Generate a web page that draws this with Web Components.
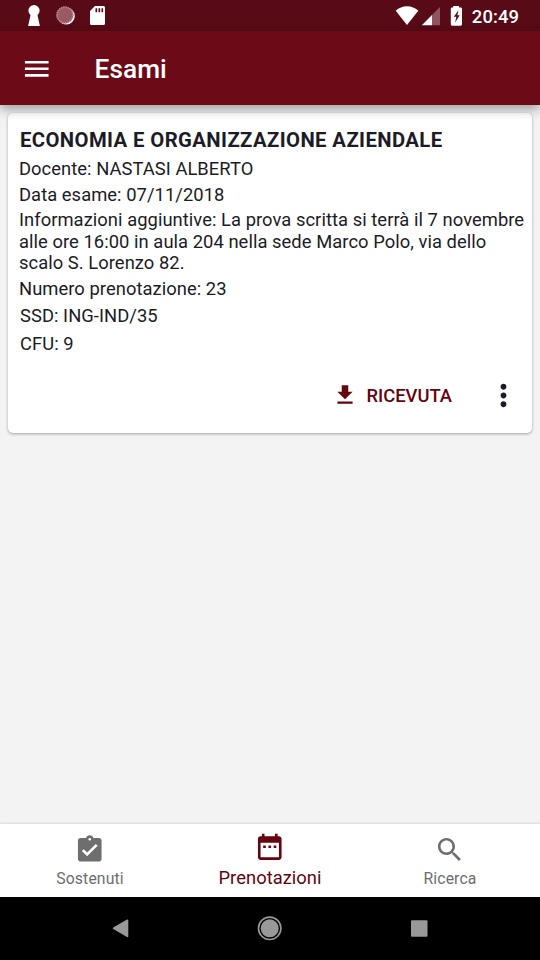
<!DOCTYPE html>
<html lang="it">
<head>
<meta charset="utf-8">
<title>Esami</title>
<style>
html,body{margin:0;height:100%}
body{font-family:Roboto,"Liberation Sans",sans-serif;color:#1c1b26;background:#f3f3f3;overflow:hidden}
</style>
</head>
<body>
<exam-app></exam-app>
<script>
const define = (name, markup) => {
  const template = document.createElement('template');
  template.innerHTML = markup;
  customElements.define(name, class extends HTMLElement {
    constructor() {
      super();
      this.attachShadow({mode: 'open'}).append(template.content.cloneNode(true));
    }
  });
};

const ICONS = {
  menu: 'M3 18h18v-2H3v2zm0-5h18v-2H3v2zm0-7v2h18V6H3z',
  download: 'M19 9h-4V3H9v6H5l7 7 7-7zM5 18v2h14v-2H5z',
  more: 'M12 8c1.1 0 2-.9 2-2s-.9-2-2-2-2 .9-2 2 .9 2 2 2zm0 2c-1.1 0-2 .9-2 2s.9 2 2 2 2-.9 2-2-.9-2-2-2zm0 6c-1.1 0-2 .9-2 2s.9 2 2 2 2-.9 2-2-.9-2-2-2z',
  done: 'M19 3h-4.18C14.4 1.84 13.3 1 12 1c-1.3 0-2.4.84-2.82 2H5c-1.1 0-2 .9-2 2v14c0 1.1.9 2 2 2h14c1.1 0 2-.9 2-2V5c0-1.1-.9-2-2-2zm-7 0c.55 0 1 .45 1 1s-.45 1-1 1-1-.45-1-1 .45-1 1-1zm-2 14l-4-4 1.41-1.41L10 14.17l6.59-6.59L18 9l-8 8z',
  calendar: 'M9 11H7v2h2v-2zm4 0h-2v2h2v-2zm4 0h-2v2h2v-2zm2-7h-1V2h-2v2H8V2H6v2H5c-1.11 0-1.99.9-1.99 2L3 20c0 1.1.89 2 2 2h14c1.1 0 2-.9 2-2V6c0-1.1-.9-2-2-2zm0 16H5V9h14v11z',
  search: 'M15.5 14h-.79l-.28-.27C15.41 12.59 16 11.11 16 9.5 16 5.91 13.09 3 9.5 3S3 5.91 3 9.5 5.91 16 9.5 16c1.61 0 3.09-.59 4.23-1.57l.27.28v.79l5 4.99L20.49 19l-4.99-5zm-6 0C7.01 14 5 11.99 5 9.5S7.01 5 9.5 5 14 7.01 14 9.5 11.99 14 9.5 14z'
};

customElements.define('md-icon', class extends HTMLElement {
  constructor() {
    super();
    this.attachShadow({mode: 'open'});
  }
  connectedCallback() {
    this.shadowRoot.innerHTML = `<style>:host{display:block;flex:none;width:var(--icon-size,31.5px);height:var(--icon-size,31.5px)}svg{display:block;width:100%;height:100%;fill:currentColor}</style>
      <svg viewBox="0 0 24 24"><path d="${ICONS[this.getAttribute('name')]}"/></svg>`;
  }
});

define('status-bar', `
<style>
:host{display:flex;height:31px;box-sizing:border-box;background:#580a16;color:#fff;justify-content:space-between;padding-right:21px}
svg{display:block;flex:none}
.right{display:flex}
span{font-size:18.4px;font-weight:500;line-height:33px;letter-spacing:.1px;margin-left:1px}
</style>
<svg width="120" height="31" viewBox="0 0 120 31">
  <circle cx="34" cy="10.600" r="5.600" fill="#fff"/>
  <path fill="#fff" d="M31 13h6l2.900 13H28.100z"/>
  <circle cx="66.2" cy="16" r="8.6" fill="#fff"/>
  <circle cx="64.8" cy="15" r="8.5" fill="#9a5965"/>
  <circle cx="65" cy="15" r="7.9" fill="none" stroke="#b48790" stroke-width="1.8" stroke-dasharray="1.2 1"/>
  <path fill="#fff" fill-rule="evenodd" d="M95 6h8.5q1.5 0 1.5 1.5v16q0 1.5-1.5 1.500h-12q-1.500 0-1.500-1.500V11zM95.500 8.300v4h1.700v-4zM98.500 8.300v4h1.700v-4zM101.500 8.300v4h1.600v-4z"/>
</svg>
<div class="right">
<svg width="76" height="31" viewBox="395 0 76 31">
  <path fill="#fff" d="M407 25 395.700 10.800Q400.500 6.200 407 6.200t11.300 4.600z"/>
  <path fill="#8d5560" d="M440 7v18.200h-8V15z"/>
  <path fill="#fff" d="M432 15v10.200h-10.200z"/>
  <path fill="#fff" d="M453.500 6h2.500q.5 0 .5 1.500h4.300q1.200 0 1.200 1.300v15.500q0 1.400-1.300 1.400h-8.600q-1.300 0-1.300-1.400V8.800q0-1.300 1.300-1.300h1.400z"/>
  <path fill="#fff" d="M453.400 6h5.700v2h-5.700z"/>
  <path fill="#580a16" d="M458.500 10.200 453.800 16.800h2.500l-1.200 5.700 4.600-7.300h-2.400z"/>
</svg>
<span>20:49</span></div>`);

define('app-bar', `
<style>
:host{display:flex;height:74px;box-sizing:border-box;align-items:center;background:#6d0a17;color:#fff;padding:2px 0 0 21px;gap:42px;position:relative;z-index:1;box-shadow:0 4px 11px rgba(0,0,0,.36)}
h1{margin:0;font-size:26.250px;line-height:31px;font-weight:500;letter-spacing:.05px}
</style>
<md-icon name="menu"></md-icon><h1><slot></slot></h1>`);

define('exam-card', `
<style>
:host{display:flex;flex-direction:column;box-sizing:border-box;height:320px;background:#fff;border-radius:5px;padding:15px 4px 0 11px;box-shadow:0 1px 3px rgba(0,0,0,.34)}
h2{margin:0 0 0 1px;font-size:20.300px;line-height:25px;font-weight:700;letter-spacing:.4px;white-space:nowrap}
.body{display:flex;flex-direction:column;gap:4px;padding-top:5px;margin-right:-4px}
.actions{display:flex;align-items:center;color:#66030f;padding:22px 7.500px 0 0;justify-content:flex-end}
.actions span{font-size:18.375px;font-weight:500;margin:0 33.500px 0 8.500px}
.actions md-icon:last-child{color:#1c1b26}
md-icon{--icon-size:26px}
md-icon:last-child{--icon-size:35px}
</style>
<h2><slot name="title"></slot></h2>
<div class="body"><slot></slot></div>
<div class="actions"><md-icon name="download"></md-icon><span>RICEVUTA</span><md-icon name="more"></md-icon></div>`);

define('exam-field', `
<style>
:host{display:block;font-size:18.375px;line-height:21.500px;letter-spacing:.05px}
:host([inset]){padding:1.600px 0 1.300px 1px}
</style><slot></slot>`);

define('nav-tab', `
<style>
:host{display:flex;flex:0 0 180px;flex-direction:column;align-items:center;padding-top:9.500px;box-sizing:border-box;color:#6e6e6e;font-size:15.750px;line-height:18px;letter-spacing:.12px}
:host([active]){color:#66030f;font-size:18.375px;padding-top:7px;letter-spacing:.03px}
span{margin-top:4.500px}
:host([active]) span{margin-top:6px}
</style><slot name="icon"></slot><span><slot></slot></span>`);

define('tab-bar', `
<style>:host{display:flex;height:73px;background:#fff;box-shadow:0 -1px 2px rgba(0,0,0,.1)}</style><slot></slot>`);

define('system-nav', `
<style>:host{display:block;height:63px;background:#000;position:relative}svg{display:block}</style>
<svg width="540" height="63" viewBox="0 0 540 63" fill="#999">
  <path d="M113.200 30.600 127 22.600q1.300-.7 1.300.8v15.900q0 1.500-1.300.8l-13.800-8q-1-.7 0-1.500z"/>
  <circle cx="269.700" cy="31.300" r="9"/><circle cx="269.700" cy="31.300" r="11.200" fill="none" stroke="#999" stroke-width="1.600"/>
  <rect x="411" y="23.200" width="16.500" height="16.500" rx="1"/>
</svg>`);

define('exam-app', `
<style>
:host{display:flex;flex-direction:column;width:540px;height:960px;background:#f3f3f3}
main{flex:1;padding:8px}
</style>
<status-bar></status-bar>
<app-bar>Esami</app-bar>
<main>
<exam-card>
  <span slot="title">ECONOMIA E ORGANIZZAZIONE AZIENDALE</span>
  <exam-field>Docente: NASTASI ALBERTO</exam-field>
  <exam-field>Data esame: 07/11/2018</exam-field>
  <exam-field>Informazioni aggiuntive: La prova scritta si terrà il 7 novembre alle ore 16:00 in aula 204 nella sede Marco Polo, via dello scalo S. Lorenzo 82.</exam-field>
  <exam-field>Numero prenotazione: 23</exam-field>
  <exam-field inset>SSD: ING-IND/35</exam-field>
  <exam-field inset>CFU: 9</exam-field>
</exam-card>
</main>
<tab-bar>
  <nav-tab><md-icon slot="icon" name="done"></md-icon>Sostenuti</nav-tab>
  <nav-tab active><md-icon slot="icon" name="calendar"></md-icon>Prenotazioni</nav-tab>
  <nav-tab><md-icon slot="icon" name="search"></md-icon>Ricerca</nav-tab>
</tab-bar>
<system-nav></system-nav>`);
</script>
</body>
</html>
